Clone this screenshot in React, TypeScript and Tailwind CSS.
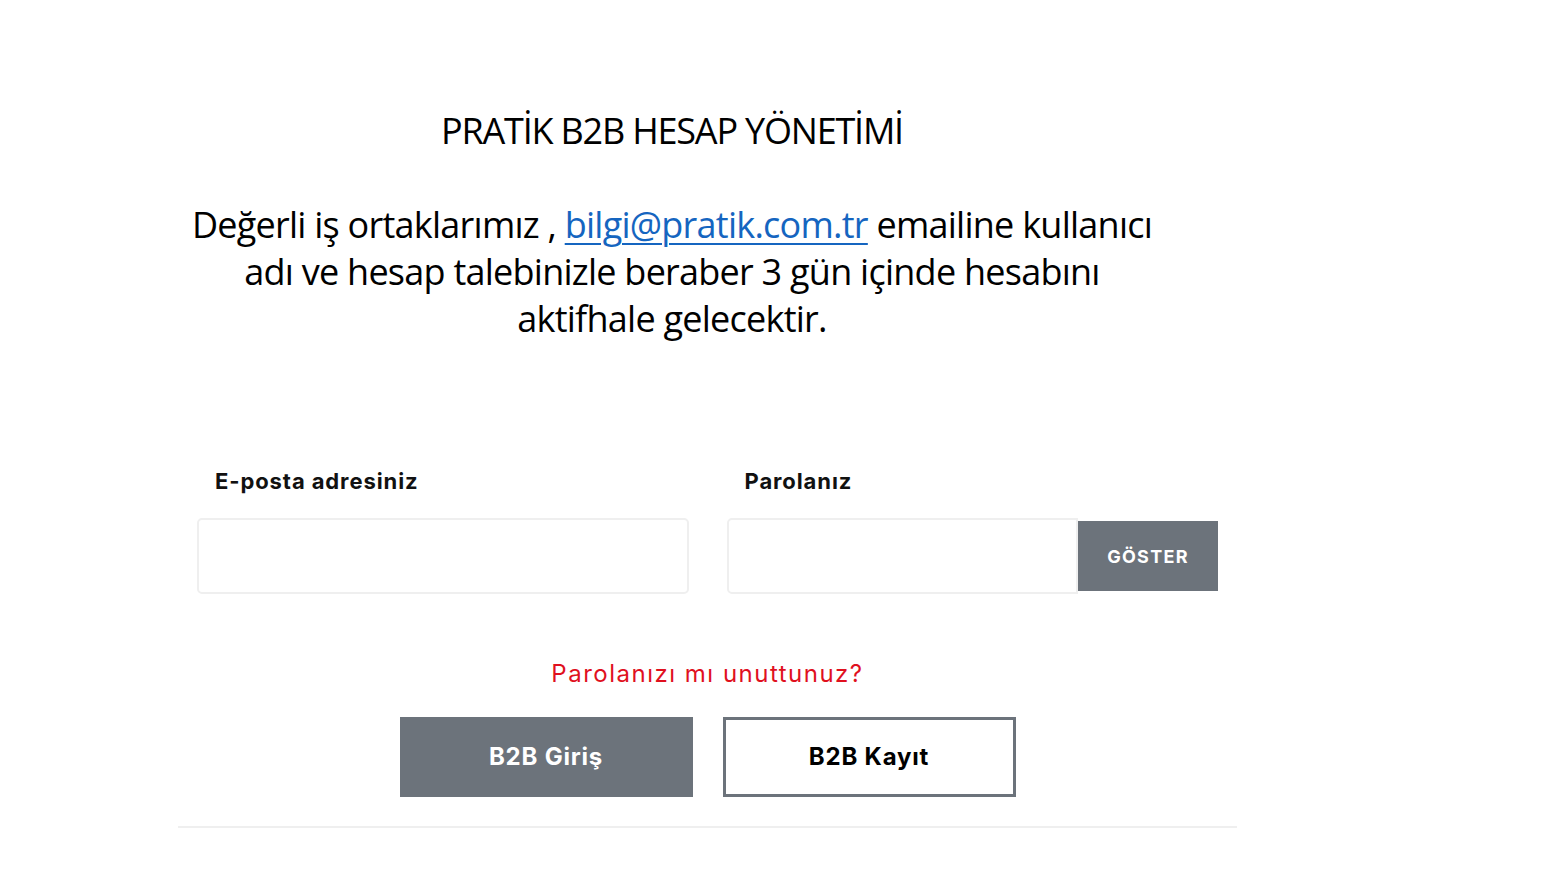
import React from "react";

export default function App() {
  return (
    <div className="min-h-[896px] w-[1546px] bg-white">
      <div className="w-[1344px] pt-[106px] text-center text-black" style={{ fontFamily: '"Open Sans", "Noto Sans", sans-serif' }}>
        <h1 className="text-[36px] leading-[50px] tracking-[-1.2px] font-normal">PRATİK B2B HESAP YÖNETİMİ</h1>
        <p className="mt-[45px] text-[36px] leading-[47px] tracking-[-0.75px] font-medium">
          Değerli iş ortaklarımız ,{" "}
          <a href="#" className="text-[#1565c0] underline decoration-[2px] underline-offset-[5px]">bilgi@pratik.com.tr</a>{" "}
          emailine kullanıcı
          <br />
          adı ve hesap talebinizle beraber 3 gün içinde hesabını
          <br />
          aktifhale gelecektir.
        </p>
      </div>

      <div className="ml-[178px] mt-[125px] w-[1059px]" style={{ fontFamily: 'Inter, "Noto Sans", sans-serif' }}>
        <div className="flex">
          <div className="flex-1 px-[19px]">
            <label className="block pl-[18px] text-[22px] leading-[28px] font-bold tracking-[0.9px] text-[#111]">E-posta adresiniz</label>
            <div className="mt-[23px] h-[76px] rounded-[5px] border-2 border-[#efefef] bg-white" />
          </div>
          <div className="flex-1 px-[19px]">
            <label className="block pl-[18px] text-[22px] leading-[28px] font-bold tracking-[0.9px] text-[#111]">Parolanız</label>
            <div className="mt-[23px] flex h-[76px] items-center">
              <div className="h-[76px] flex-1 rounded-l-[5px] border-2 border-[#efefef] bg-white" />
              <div className="flex h-[70px] w-[140px] items-center justify-center bg-[#6c737b] text-[18px] font-bold tracking-[1.3px] text-white">GÖSTER</div>
            </div>
          </div>
        </div>

        <div className="mt-[65px] text-center text-[24px] leading-[30px] tracking-[1.5px] text-[#e0101e]">Parolanızı mı unuttunuz?</div>

        <div className="mt-[28px] flex justify-center gap-[30px]">
          <button className="flex h-[80px] w-[293px] items-center justify-center bg-[#6c737b] text-[24px] font-bold tracking-[0.8px] text-white">B2B Giriş</button>
          <button className="flex h-[80px] w-[293px] items-center justify-center border-[3px] border-[#6c737b] bg-white text-[24px] font-bold tracking-[0.8px] text-black">B2B Kayıt</button>
        </div>

        <div className="mt-[29px] h-[2px] bg-[#efefef]" />
      </div>
    </div>
  );
}
